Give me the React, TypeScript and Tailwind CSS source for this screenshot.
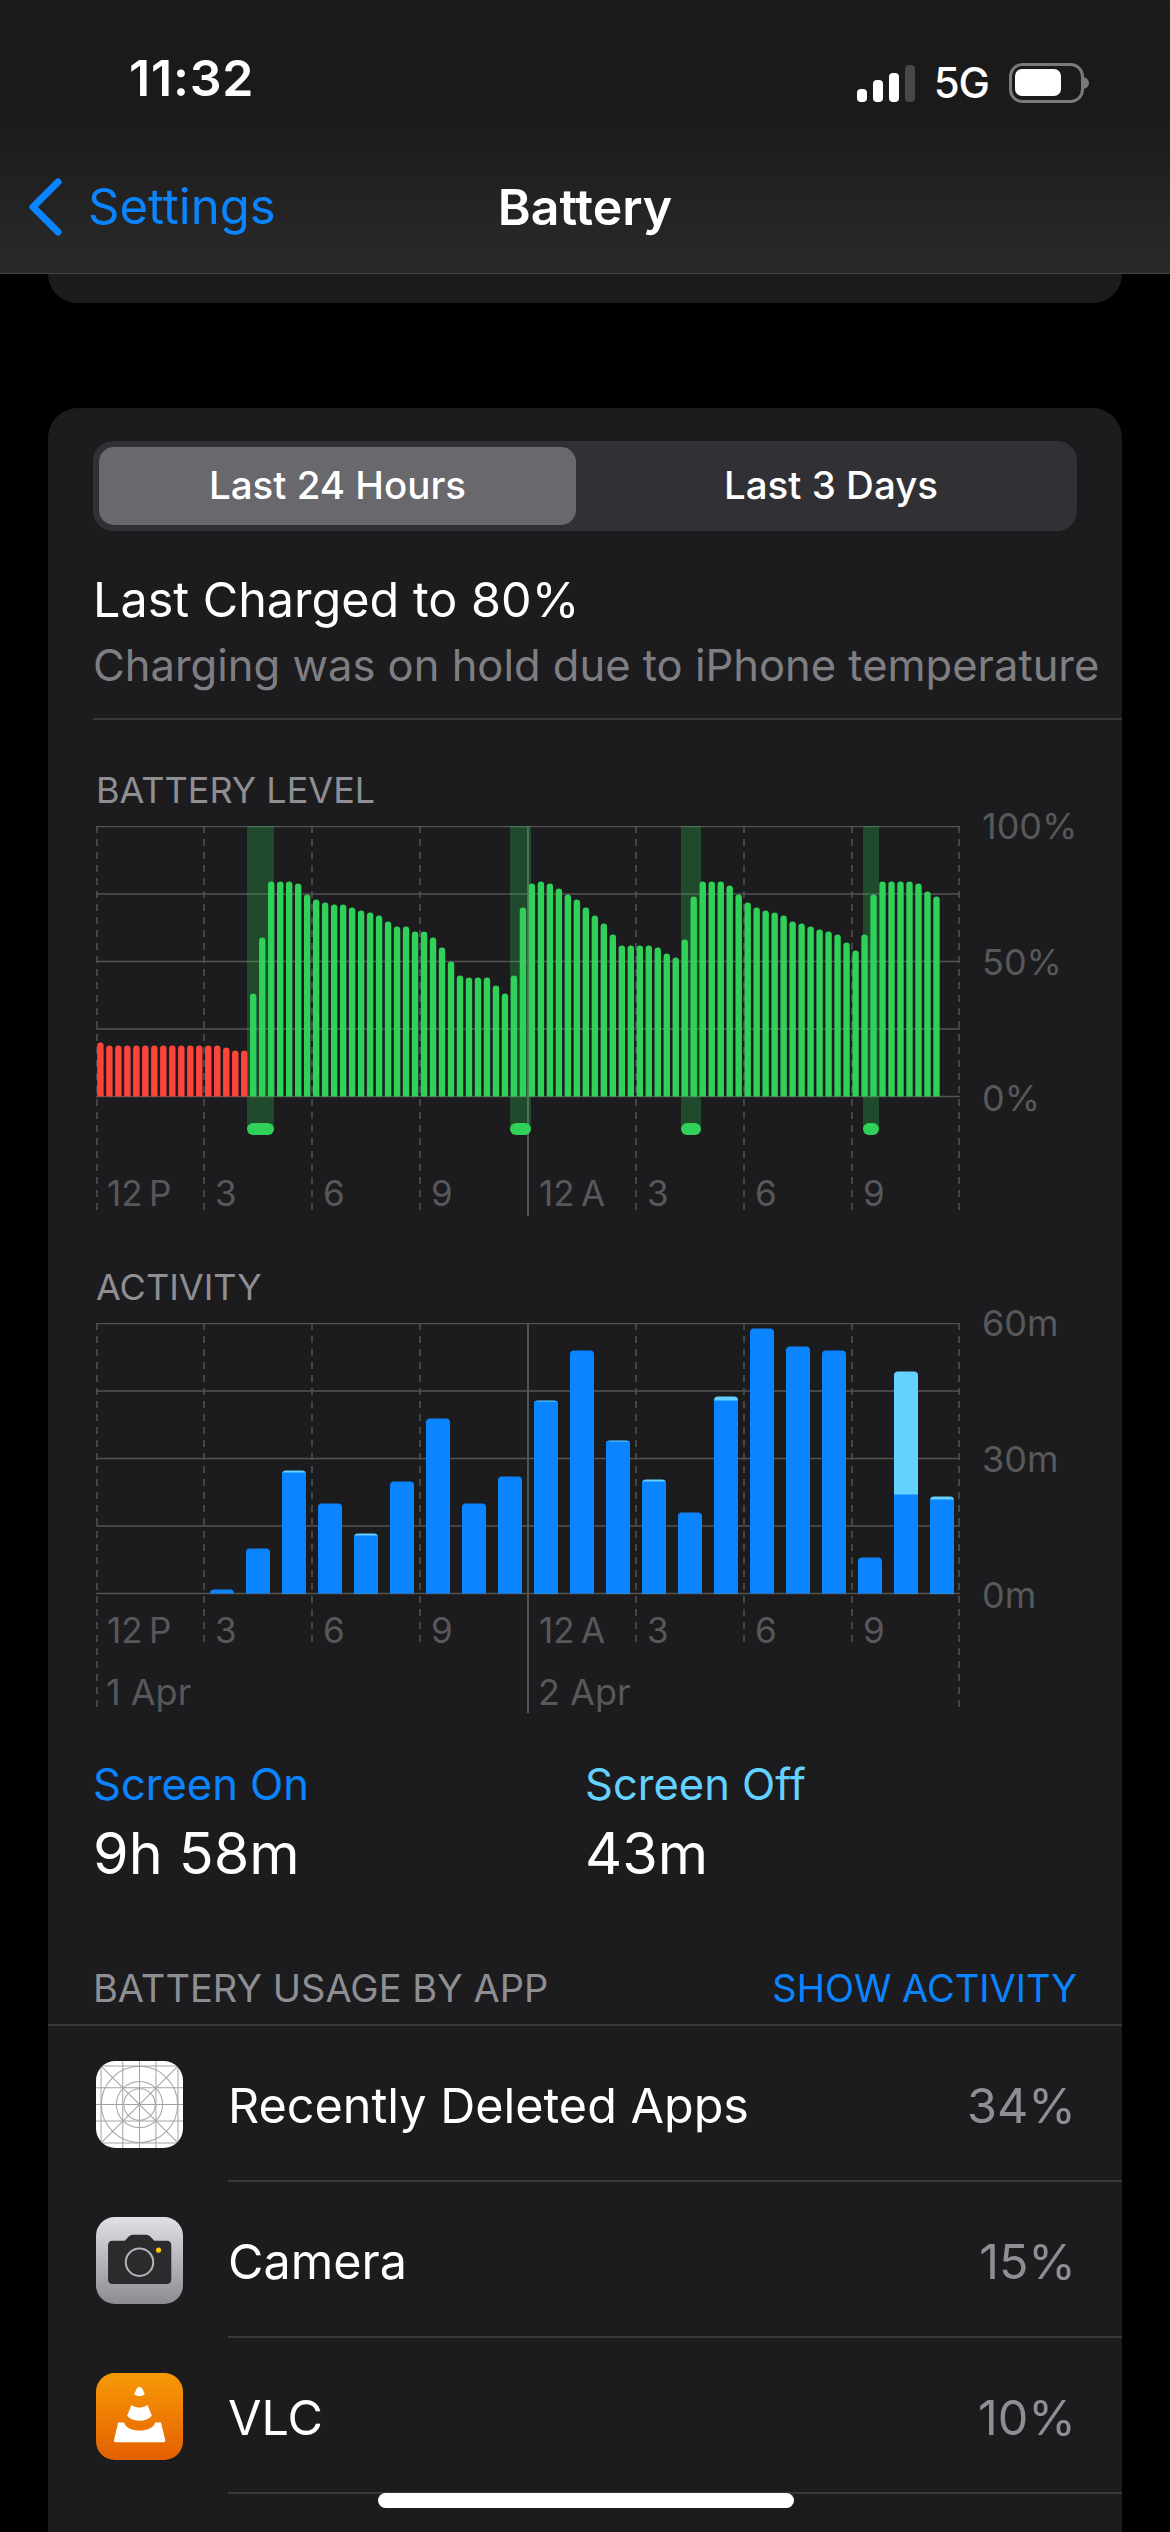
const FONT = "font-['Inter','Liberation_Sans',sans-serif]";

// bar tops measured against a 270px tall chart
const levels = [
  54, 51, 51, 51, 51, 51, 51, 51, 51, 51, 51, 51, 51, 51, 49, 46, 46,
  103, 159, 215, 215, 215, 213, 202, 197, 194, 192, 192, 189, 186, 184, 181, 175, 170, 170, 165, 165, 159, 149, 135, 121, 119, 119, 119, 111, 103, 121, 189,
  213, 215, 213, 208, 202, 197, 189, 181, 173, 162, 151, 151, 151, 151, 149, 143, 139, 157, 200, 215, 215, 215, 211, 202, 194, 189, 186, 184, 181, 175, 173, 170, 167, 165, 162, 154, 146, 162, 202, 215, 215, 215, 215, 213, 205, 200,
];

const charges = [
  { x: 151, w: 27 },
  { x: 414, w: 21 },
  { x: 585, w: 20 },
  { x: 767, w: 16 },
];

// [screen on px, screen off px on top]
const activity: [number, number][] = [
  [0, 0], [0, 0], [0, 0], [4, 0], [45, 0], [121, 2], [90, 0], [58, 2], [112, 0], [175, 0], [90, 0], [117, 0],
  [192, 1], [243, 0], [152, 1], [112, 2], [81, 0], [193, 4], [265, 0], [247, 0], [243, 0], [36, 0], [99, 123], [94, 3],
];

const topRounded = (x: number, w: number, base: number, h: number, r: number) => {
  const c = Math.min(r, h);
  return `M${x} ${base}V${base - h + c}Q${x} ${base - h} ${x + c} ${base - h}H${x + w - c}Q${x + w} ${base - h} ${x + w} ${base - h + c}V${base}Z`;
};

function Grid({ short, long, solid }: { short: number; long: number; solid: number }) {
  return (
    <g fill="none" stroke="#535356" strokeWidth="1.5">
      {[0, 67.5, 135, 202.5, 270].map((y) => (
        <line key={y} x1="0" x2="864" y1={y + 0.5} y2={y + 0.5} />
      ))}
      {[0, 108, 216, 324, 432, 540, 648, 756, 864].map((x) =>
        x === 432 ? (
          <line key={x} x1={x} x2={x} y1="0" y2={solid} strokeWidth="2" />
        ) : (
          <line
            key={x}
            x1={x === 864 ? 863 : x === 0 ? 1 : x}
            x2={x === 864 ? 863 : x === 0 ? 1 : x}
            y1="0"
            y2={x === 0 || x === 864 ? long : short}
            strokeDasharray="7 6"
          />
        ),
      )}
    </g>
  );
}

function YLabels({ labels }: { labels: string[] }) {
  return (
    <div className="ml-[22px] flex h-[272px] flex-col justify-between text-[36px] text-[#58585b]">
      {labels.map((l) => (
        <div key={l} className="flex h-0 items-center leading-none">
          {l}
        </div>
      ))}
    </div>
  );
}

function XLabels({ className }: { className: string }) {
  return (
    <div className={`absolute left-0 grid w-[864px] grid-cols-8 text-[35px] leading-[44px] text-[#58585b] ${className}`}>
      {["12\u2009P", "3", "6", "9", "12\u2009A", "3", "6", "9"].map((l, i) => (
        <div key={i} className="pl-[11px]">
          {l}
        </div>
      ))}
    </div>
  );
}

function BatteryChart() {
  return (
    <div className="ml-[3px] flex">
      <div className="relative h-[390px] w-[864px]">
        <svg width="864" height="390" className="block">
          <Grid short={384} long={384} solid={390} />
          {charges.map((c) => (
            <g key={c.x}>
              <rect x={c.x} y="0" width={c.w} height="302" fill="#30d158" fillOpacity="0.25" />
              <rect x={c.x} y="297" width={c.w} height="12" rx="6" fill="#30d158" />
            </g>
          ))}
          {levels.map((h, i) => (
            <path
              key={i}
              d={topRounded(1.2 + i * 8.99, 6.4, 270.5, h, 3.2)}
              fill={i < 17 ? "#ff453a" : "#30d158"}
            />
          ))}
        </svg>
        <XLabels className="top-[345px]" />
      </div>
      <YLabels labels={["100%", "50%", "0%"]} />
    </div>
  );
}

function ActivityChart() {
  return (
    <div className="ml-[3px] flex">
      <div className="relative h-[390px] w-[864px]">
        <svg width="864" height="390" className="block">
          <Grid short={324} long={384} solid={390} />
          {activity.map(([on, off], i) => {
            const x = 6 + i * 36;
            if (on + off === 0) return null;
            return (
              <g key={i}>
                <path d={topRounded(x, 24, 270.5, on + off, 4)} fill={off > 0 ? "#64d2ff" : "#0a84ff"} />
                {off > 0 && <path d={`M${x} 270.5V${270.5 - on}H${x + 24}V270.5Z`} fill="#0a84ff" />}
              </g>
            );
          })}
        </svg>
        <XLabels className="top-[285px]" />
        <div className="absolute left-0 top-[347px] grid w-[864px] grid-cols-2 text-[36px] leading-[44px] text-[#58585b]">
          <div className="pl-[10px]">1 Apr</div>
          <div className="pl-[10px]">2 Apr</div>
        </div>
      </div>
      <YLabels labels={["60m", "30m", "0m"]} />
    </div>
  );
}

function BlankIcon() {
  const lines = [15, 80, 130, 179, 245];
  return (
    <svg viewBox="0 0 260 260" className="h-[87px] w-[87px] shrink-0">
      <defs>
        <clipPath id="blank-clip">
          <rect width="260" height="260" rx="58" />
        </clipPath>
      </defs>
      <g clipPath="url(#blank-clip)">
        <rect width="260" height="260" fill="#fff" />
        <g fill="none" stroke="#a3a3a5" strokeWidth="3">
          {lines.map((p) => (
            <g key={p}>
              <line x1={p} x2={p} y1="0" y2="260" />
              <line y1={p} y2={p} x1="0" x2="260" />
            </g>
          ))}
          <line x1="0" y1="0" x2="260" y2="260" />
          <line x1="260" y1="0" x2="0" y2="260" />
          <circle cx="130" cy="130" r="114" />
          <circle cx="130" cy="130" r="69" />
          <circle cx="130" cy="130" r="47" />
        </g>
      </g>
    </svg>
  );
}

function CameraIcon() {
  return (
    <svg viewBox="0 0 260 260" className="h-[87px] w-[87px] shrink-0">
      <defs>
        <linearGradient id="cam" x1="0" y1="0" x2="0" y2="1">
          <stop offset="0" stopColor="#e0e0e5" />
          <stop offset="1" stopColor="#8b8b90" />
        </linearGradient>
      </defs>
      <rect width="260" height="260" rx="56" fill="url(#cam)" />
      <path
        d="M50 71H86L98 58Q103 53 110 53H150Q157 53 162 58L174 71H211Q225 71 225 85V186Q225 200 211 200H50Q36 200 36 186V85Q36 71 50 71Z"
        fill="#2b2b2d"
      />
      <circle cx="130" cy="135" r="41" fill="none" stroke="#b5b5b9" strokeWidth="6" />
      <circle cx="187" cy="99" r="7.5" fill="#ffcc00" />
    </svg>
  );
}

function VlcIcon() {
  return (
    <svg viewBox="0 0 260 260" className="h-[87px] w-[87px] shrink-0">
      <defs>
        <linearGradient id="vlc" x1="0" y1="0" x2="0" y2="1">
          <stop offset="0" stopColor="#f89a07" />
          <stop offset="1" stopColor="#e35f00" />
        </linearGradient>
      </defs>
      <rect width="260" height="260" rx="56" fill="url(#vlc)" />
      <g fill="#fff">
        <path d="M130 42C136 42 140 48 142 55L146 63C138 71 122 71 114 63L118 55C120 48 124 42 130 42Z" />
        <path d="M106 96C118 106 142 106 154 96L167 128C150 148 110 148 93 128Z" />
        <path d="M66 148H84C92 180 168 180 177 148H194L207 200Q208 207 200 207H60Q52 207 54 200Z" />
      </g>
    </svg>
  );
}

const apps = [
  { name: "Recently Deleted Apps", pct: "34%", icon: <BlankIcon /> },
  { name: "Camera", pct: "15%", icon: <CameraIcon /> },
  { name: "VLC", pct: "10%", icon: <VlcIcon /> },
];

export default function App() {
  return (
    <div className={`${FONT} relative flex h-[2532px] w-[1170px] flex-col overflow-hidden bg-black text-white`}>
      {/* status + nav */}
      <header className="h-[273px] shrink-0 bg-gradient-to-b from-[#1b1b1b] via-[#1a1a1a] via-40% to-[#2a2a2a]">
        <div className="flex h-[156px] items-start justify-between pl-[129px] pr-[79px] pt-[48px]">
          <span className="text-[50px] font-semibold leading-[60px] tracking-[0.8px]">11:32</span>
          <div className="flex items-center">
            <svg width="58" height="37" viewBox="0 0 58 37" className="mt-[11px]">
              <rect x="0" y="24" width="10" height="13" rx="4" fill="#fff" />
              <rect x="16" y="15" width="10" height="22" rx="4" fill="#fff" />
              <rect x="32" y="8" width="10" height="29" rx="4" fill="#fff" />
              <rect x="48" y="0" width="10" height="37" rx="4" fill="#48484a" />
            </svg>
            <span className="ml-[19px] mt-[11px] text-[42px] font-medium leading-[48px] tracking-[-1px]">5G</span>
            <svg width="82" height="40" viewBox="0 0 82 40" className="ml-[20px] mt-[11px]">
              <rect x="1.5" y="1.5" width="72" height="37" rx="12" fill="none" stroke="#7a7a7a" strokeWidth="3" />
              <rect x="6" y="6" width="46" height="27" rx="7" fill="#fff" />
              <path d="M75 14Q80 16 80 20Q80 24 75 26Z" fill="#7a7a7a" />
            </svg>
          </div>
        </div>
        <div className="grid grid-cols-[1fr_auto_1fr] items-center px-[28px] pt-[21px]">
          <div className="flex items-center">
            <svg width="34" height="58" viewBox="0 0 34 58" fill="none">
              <path d="M30 4L5 29L30 54" stroke="#0a84ff" strokeWidth="7" strokeLinecap="round" strokeLinejoin="round" />
            </svg>
            <span className="ml-[26px] text-[49px] leading-[60px] text-[#0a84ff]">Settings</span>
          </div>
          <span className="text-[50px] font-semibold leading-[60px]">Battery</span>
          <div />
        </div>
      </header>
      <div className="h-px shrink-0 bg-[#444446]" />

      {/* tail of the card above */}
      <div className="mx-[48px] h-[29px] shrink-0 rounded-b-[30px] bg-[#1c1c1e]" />

      <main className="mx-[48px] mt-[105px] flex-1 rounded-t-[30px] bg-[#1c1c1e] pt-[33px]">
        <div className="mx-[45px] flex h-[90px] rounded-[20px] bg-[#313135] p-[6px] text-[38.5px] font-medium">
          <div className="flex h-[78px] w-[477px] items-center justify-center rounded-[15px] bg-[#68686d]">Last 24 Hours</div>
          <div className="flex flex-1 items-center justify-center pl-[15px]">Last 3 Days</div>
        </div>

        <div className="mt-[39px] pl-[45px] text-[48.5px] leading-[60px]">Last Charged to 80%</div>
        <div className="mt-[5px] whitespace-nowrap pl-[45px] text-[43.5px] leading-[60px] text-[#7f7f83]">
          Charging was on hold due to iPhone temperature
        </div>
        <div className="ml-[45px] mt-[23px] h-[2px] bg-[#38383a]" />

        <div className="pl-[45px]">
          <div className="mt-[48px] pl-[3px] text-[36px] leading-[44px] text-[#8e8e93]">BATTERY LEVEL</div>
          <div className="mt-[14px]">
            <BatteryChart />
          </div>
          <div className="mt-[49px] pl-[3px] text-[36px] leading-[44px] text-[#8e8e93]">ACTIVITY</div>
          <div className="mt-[14px]">
            <ActivityChart />
          </div>
        </div>

        <div className="mt-[46px] flex pl-[45px]">
          <div className="w-[492px]">
            <div className="text-[43.5px] leading-[50px] text-[#0a84ff]">Screen On</div>
            <div className="mt-[9px] text-[57.5px] leading-[70px]">9h 58m</div>
          </div>
          <div>
            <div className="text-[43.5px] leading-[50px] text-[#64d2ff]">Screen Off</div>
            <div className="mt-[9px] text-[57.5px] leading-[70px]">43m</div>
          </div>
        </div>

        <div className="mt-[78px] flex justify-between px-[45px] text-[38px] leading-[44px]">
          <span className="text-[#8e8e93]">BATTERY USAGE BY APP</span>
          <span className="text-[#0a84ff]">SHOW ACTIVITY</span>
        </div>
        <div className="mt-[14px] h-[2px] bg-[#38383a]" />

        {apps.map((a) => (
          <div key={a.name} className="flex h-[156px] items-center pl-[48px]">
            {a.icon}
            <div className="ml-[45px] flex h-full flex-1 items-center justify-between border-b-2 border-[#38383a] pr-[46px] pt-[5px]">
              <span className="text-[48.5px] leading-[60px]">{a.name}</span>
              <span className="text-[48.5px] leading-[60px] text-[#8e8e93]">{a.pct}</span>
            </div>
          </div>
        ))}
      </main>

      <div className="absolute bottom-[24px] left-[378px] h-[15px] w-[416px] rounded-full bg-white" />
    </div>
  );
}
